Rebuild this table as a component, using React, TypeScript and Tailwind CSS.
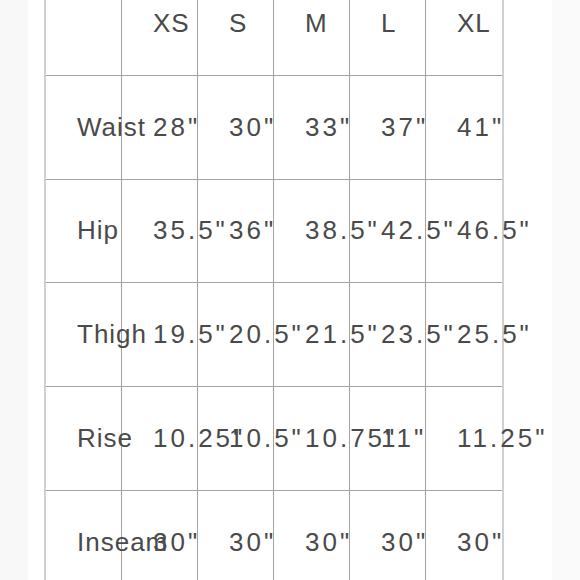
import React from "react";

const header = ["", "XS", "S", "M", "L", "XL"];
const rows: string[][] = [
  ["Waist", '28"', '30"', '33"', '37"', '41"'],
  ["Hip", '35.5"', '36"', '38.5"', '42.5"', '46.5"'],
  ["Thigh", '19.5"', '20.5"', '21.5"', '23.5"', '25.5"'],
  ["Rise", '10.25"', '10.5"', '10.75"', '11"', '11.25"'],
  ["Inseam", '30"', '30"', '30"', '30"', '30"'],
];

function Cell({ text, last, kind }: { text: string; last: boolean; kind: "label" | "value" }) {
  return (
    <div
      className={
        "h-[103.75px] flex items-center pl-[31px] whitespace-nowrap overflow-visible border-b border-[#a3a3a3] " +
        (last ? "border-r-0" : "border-r border-r-[#a3a3a3]")
      }
    >
      <span
        className={
          "text-[26px] leading-none text-[#4a4a4a] -mt-[1px] " +
          (kind === "value" ? "tracking-[3px]" : "tracking-[1px]")
        }
      >
        {text}
      </span>
    </div>
  );
}

export default function App() {
  const all = [header, ...rows];
  return (
    <div
      className="w-[580px] h-[580px] overflow-hidden bg-white flex"
      style={{ fontFamily: '"Liberation Sans", Arial, Helvetica, sans-serif' }}
    >
      <div className="w-[28px] h-full bg-[#f8f8f8] shrink-0" />
      <div className="w-[16px] shrink-0" />
      <div className="w-[460px] shrink-0 border-x-2 border-[#d0d0d0] -mt-[28px] self-start">
        <div className="grid grid-cols-6">
          {all.map((r, ri) =>
            r.map((t, ci) => (
              <Cell
                key={ri + "-" + ci}
                text={t}
                last={ci === 5}
                kind={ri > 0 && ci > 0 ? "value" : "label"}
              />
            ))
          )}
        </div>
      </div>
      <div className="flex-1" />
      <div className="w-[28px] h-full bg-[#fafafa] shrink-0" />
    </div>
  );
}
